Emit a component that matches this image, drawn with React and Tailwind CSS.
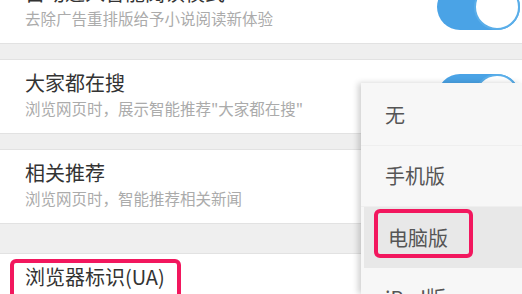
import React from "react";

const rows = [
  { title: "自动进入智能阅读模式", desc: "去除广告重排版给予小说阅读新体验", toggle: true },
  { title: "大家都在搜", desc: '浏览网页时，展示智能推荐"大家都在搜"', toggle: true },
  { title: "相关推荐", desc: "浏览网页时，智能推荐相关新闻", toggle: false },
];

const options = ["无", "手机版", "电脑版", "iPad版"];

const Toggle = () => (
  <div className="relative w-[83px] h-[46px] rounded-full bg-[#4aa3e6] mr-[2px] mt-[14px]">
    <div className="absolute right-0 top-0 w-[46px] h-[46px] rounded-full bg-white border-2 border-[#5aaee9]" />
  </div>
);

export default function App() {
  return (
    <div
      className="relative w-[522px] h-[294px] overflow-hidden bg-[#efefef]"
      style={{ fontFamily: '"Noto Sans CJK SC", "Noto Sans", sans-serif' }}
    >
      <div className="flex flex-col gap-[15px] -mt-[31px]">
        {rows.map((row) => (
          <div
            key={row.title}
            className="flex justify-between h-[75px] bg-white border-y border-[#e2e2e2]"
          >
            <div className="pl-[25px] pt-[11px]">
              <div className="text-[20px] leading-[24px] text-[#333]">{row.title}</div>
              <div className="mt-[3px] text-[15.5px] leading-[20px] text-[#ababab] whitespace-nowrap">
                {row.desc}
              </div>
            </div>
            {row.toggle && <Toggle />}
          </div>
        ))}
      </div>

      <div className="relative mt-[29px] h-[60px] bg-white border-t border-[#e2e2e2] pl-[25px] pt-[11px]">
        <div className="text-[20px] leading-[24px] text-[#333]">浏览器标识(UA)</div>
        <div className="absolute left-[10px] top-[5px] w-[171px] h-[60px] border-4 border-[#f2175e] rounded-md" />
      </div>

      {/* dropdown */}
      <div className="absolute left-[361px] top-[83px] right-0 bottom-0 bg-[#f7f7f7] pt-[2px] shadow-[-3px_0_6px_rgba(0,0,0,0.18)]">
        {options.map((opt, i) => (
          <div
            key={opt}
            className={`relative h-[61px] flex items-center pl-[24px] text-[20px] text-[#555] ${
              i === 2 ? "bg-[#e8e8e8] ml-[3px] pl-[21px]" : "border-b border-[#efefef]"
            }`}
          >
            {opt}
            {i === 2 && (
              <div className="absolute left-[10px] top-[2px] w-[99px] h-[49px] border-4 border-[#f2175e] rounded-md" />
            )}
          </div>
        ))}
      </div>
    </div>
  );
}
